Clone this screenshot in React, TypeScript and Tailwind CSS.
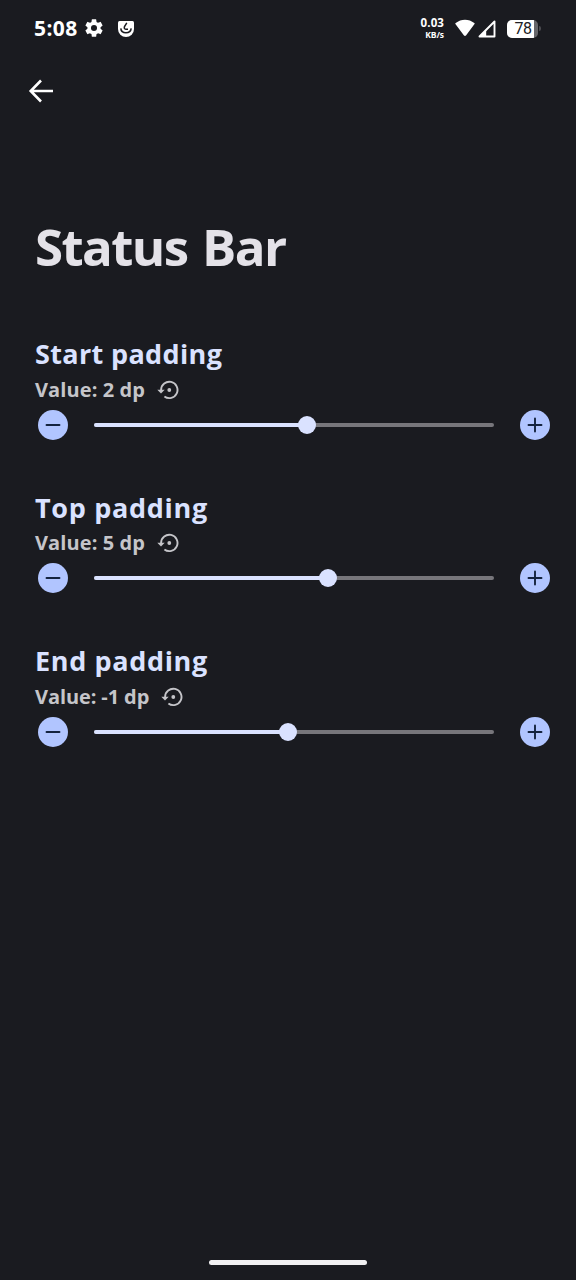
const settings = [
  { title: "Start padding", value: "2 dp", percent: 53.3, titleStyle: "tracking-[0.35px]", valueStyle: "w-[110px] tracking-[0.1px]" },
  { title: "Top padding", value: "5 dp", percent: 58.4, titleStyle: "tracking-[0.7px]", valueStyle: "w-[110px] tracking-[0.1px]" },
  { title: "End padding", value: "-1 dp", percent: 48.4, titleStyle: "tracking-[0.65px]", valueStyle: "w-[114px] tracking-[-0.1px]" },
];

function StatusIcons() {
  return (
    <div className="flex h-14 items-center pl-[34px] pr-[35px] text-white">
      <span className="w-[50px] whitespace-nowrap text-[21px] font-bold leading-none tracking-[0.4px]">5:08</span>
      <svg className="h-[22px] w-[22px] -ml-[1px]" viewBox="0 0 24 24" fill="currentColor">
        <path d="M19.14 12.94c.04-.3.06-.61.06-.94s-.02-.64-.07-.94l2.03-1.58a.49.49 0 0 0 .12-.61l-1.92-3.32a.49.49 0 0 0-.59-.22l-2.39.96c-.5-.38-1.03-.7-1.62-.94l-.36-2.54a.48.48 0 0 0-.48-.41h-3.84a.48.48 0 0 0-.47.41l-.36 2.54c-.59.24-1.13.57-1.62.94l-2.39-.96a.48.48 0 0 0-.59.22L2.74 8.87c-.12.21-.08.47.12.61l2.03 1.58c-.05.3-.09.63-.09.94s.02.64.07.94l-2.03 1.58a.49.49 0 0 0-.12.61l1.92 3.32c.12.22.37.29.59.22l2.39-.96c.5.38 1.03.7 1.62.94l.36 2.54c.05.24.24.41.48.41h3.84c.24 0 .44-.17.47-.41l.36-2.54c.59-.24 1.13-.56 1.62-.94l2.39.96c.22.08.47 0 .59-.22l1.92-3.32a.48.48 0 0 0-.12-.61l-2.01-1.58zM12 15.3a3.3 3.3 0 1 1 0-6.6 3.3 3.3 0 0 1 0 6.6z" />
      </svg>
      <svg className="ml-[12px] mt-[2px] h-[18px] w-[18px]" viewBox="0 0 18 18" fill="none">
        <path d="M1 2.5Q1 1 2.5 1H15.5Q17 1 17 2.5V9A8 8 0 0 1 1 9Z" fill="currentColor" />
        <path d="M3.8 8.4C4.2 14.2 13.6 14.2 14.2 8.4M9.8 2.8L7.5 6.5Q6.7 9.2 8.8 9.2H11" stroke="#1a1b20" strokeWidth="1.5" />
      </svg>
      <div className="ml-auto flex w-[26px] flex-col items-end whitespace-nowrap font-bold leading-none">
        <span className="text-[11.5px] tracking-[0.1px]">0.03</span>
        <span className="mt-[3px] text-[8.5px] tracking-[-0.1px]">KB/s</span>
      </div>
      <svg className="ml-[11px] h-[18px] w-[20px]" viewBox="0 0 20 18" fill="currentColor">
        <path d="M.4 5.1Q.1 4.5.7 4.1C6-.4 14-.4 19.3 4.1Q19.9 4.5 19.5 5.1L11.2 16.2Q10 17.6 8.8 16.2Z" />
      </svg>
      <svg className="ml-[3px] mt-px h-[18px] w-[18px]" viewBox="0 0 18 18">
        <path d="M16.5 1.5V16.5H1.5Z" fill="none" stroke="currentColor" strokeWidth="1.9" strokeLinejoin="round" />
        <path d="M8.2 9.6V16.5H1.3Z" fill="currentColor" />
      </svg>
      <div className="ml-[11px] mt-px flex h-[18px] w-[31px] items-center overflow-hidden rounded-[5px] bg-[#66666a]">
        <span className="flex h-full w-[27px] items-center justify-center bg-white pl-[5px] font-['Roboto',sans-serif] text-[16px] tracking-[-0.5px] text-[#202024]">
          78
        </span>
      </div>
      <span className="ml-px h-[5px] w-[2px] rounded-r bg-[#4b4b50]" />
    </div>
  );
}

function ResetIcon() {
  return (
    <svg className="h-[22px] w-[22px]" viewBox="0 0 22 22" fill="none">
      <path d="M4.1 11.5V10.8A8.2 8.2 0 1 1 7.4 17.5" stroke="currentColor" strokeWidth="1.9" />
      <path d="M0.3 10.8H7.7L4 14.5Z" fill="currentColor" />
      <circle cx="12.3" cy="11" r="1.9" fill="currentColor" />
    </svg>
  );
}

function RoundButton({ plus = false }: { plus?: boolean }) {
  return (
    <button
      aria-label={plus ? "Increase" : "Decrease"}
      className="flex h-[30px] w-[30px] shrink-0 items-center justify-center rounded-full bg-[#b1c5ff] text-[#14233f]"
    >
      <svg className="h-4 w-4" viewBox="0 0 16 16" stroke="currentColor" strokeWidth="1.9" strokeLinecap="round">
        <path d={plus ? "M1.5 8H14.5M8 1.5V14.5" : "M1.5 8H14.5"} />
      </svg>
    </button>
  );
}

function Slider({ percent }: { percent: number }) {
  return (
    <div className="relative ml-[26px] mr-[26px] flex h-[18px] w-[400px] items-center">
      <div className="h-[4px] w-full overflow-hidden rounded-full bg-[#77767b]">
        <div className="h-full bg-[#dae2ff]" style={{ width: `${percent}%` }} />
      </div>
      <div
        className="absolute top-0 h-[18px] w-[18px] -translate-x-1/2 rounded-full bg-[#dae2ff]"
        style={{ left: `${percent}%` }}
      />
    </div>
  );
}

export default function App() {
  return (
    <div className="flex h-[1280px] w-[576px] flex-col overflow-hidden bg-[#1a1b20] font-['Open_Sans',sans-serif]">
      <StatusIcons />

      <button aria-label="Back" className="ml-[27px] mt-[21px] h-7 w-7 text-white">
        <svg className="h-7 w-7" viewBox="0 0 28 28" fill="none" stroke="currentColor" strokeWidth="2.6">
          <path d="M26 14H4M14 3.5L3.7 14L14 24.5" />
        </svg>
      </button>

      <h1 className="ml-[35px] mt-[111px] h-[60px] whitespace-nowrap text-[51px] font-bold leading-[60px] tracking-[-1.6px] [word-spacing:3px] text-[#e4e2e8]">
        Status Bar
      </h1>

      <main className="mt-[60px]">
        {settings.map((item) => (
          <section key={item.title} className="h-[153.6px]">
            <h2 className={`ml-[35px] h-[36px] whitespace-nowrap text-[27px] font-bold leading-[36px] text-[#dae2ff] ${item.titleStyle}`}>
              {item.title}
            </h2>
            <div className="ml-[35px] flex h-[35px] items-center gap-[12px] text-[#c5c5c9]">
              <p className={`whitespace-nowrap text-[20px] font-bold leading-[26px] ${item.valueStyle}`}>
                Value: {item.value}
              </p>
              <ResetIcon />
            </div>
            <div className="ml-[38px] flex h-[35px] items-center">
              <RoundButton />
              <Slider percent={item.percent} />
              <RoundButton plus />
            </div>
          </section>
        ))}
      </main>

      <div className="mx-auto mb-[15px] mt-auto h-[5px] w-[158px] rounded-full bg-[#f1f0f2]" />
    </div>
  );
}
